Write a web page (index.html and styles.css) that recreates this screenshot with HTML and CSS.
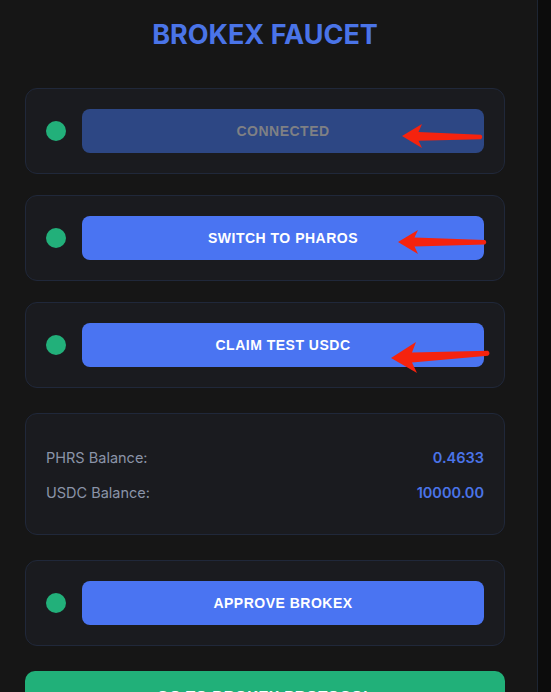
FILE: index.html
```html
<!DOCTYPE html>
<html lang="en">
<head>
    <meta charset="UTF-8">
    <meta name="viewport" content="width=device-width, initial-scale=1.0">
    <title>Brokex Faucet</title>
    <link rel="stylesheet" href="styles.css">
</head>
<body>
    <div id="faucet">
        <h1>BROKEX FAUCET</h1>

        <!-- Pasos -->
        <div class="step">
            <span class="dot"></span>
            <button class="btn connected">CONNECTED</button>
        </div>
        <div class="step">
            <span class="dot"></span>
            <button class="btn">SWITCH TO PHAROS</button>
        </div>
        <div class="step last">
            <span class="dot"></span>
            <button class="btn">CLAIM TEST USDC</button>
        </div>

        <!-- Balances -->
        <div class="balances">
            <div class="row">
                <span class="label">PHRS Balance:</span>
                <span class="value">0.4633</span>
            </div>
            <div class="row">
                <span class="label">USDC Balance:</span>
                <span class="value">10000.00</span>
            </div>
        </div>

        <div class="step last">
            <span class="dot"></span>
            <button class="btn">APPROVE BROKEX</button>
        </div>

        <button class="go">GO TO BROKEX PROTOCOL</button>
    </div>

    <!-- flechas de anotacion -->
    <svg class="notes" width="551" height="692" viewBox="0 0 551 692">
        <path d="M402 136 L422 124 L418.5 132 L481 134.8 Q483.5 137 481 139.3 L418.5 140.8 L422 148 Z"/>
        <path d="M398 242 L418 230 L414.5 237.5 L485 240 Q487.5 242.2 485 244.5 L414.5 246.5 L418 254 Z"/>
        <path d="M391 358 L416 342 L412 352.5 L488 350.8 Q491 353.2 488 355.8 L412 362.5 L417 373 Z"/>
    </svg>
</body>
</html>
```

FILE: styles.css
```css
body {
    margin: 0;
    padding: 0;
    background-color: #0c0c0c;
    font-family: Inter, "Noto Sans", sans-serif;
    overflow: hidden;
}
#faucet {
    box-sizing: border-box;
    width: 538px;
    min-height: 100vh;
    padding: 20px 32px 0 25px;
    background-color: #161616;
    border-right: 1px solid #1d2533;
}
#faucet h1 {
    margin: 0 0 38px 0;
    font-size: 27px;
    line-height: 30px;
    font-weight: 700;
    text-align: center;
    color: #4a74e8;
}
.step {
    display: flex;
    align-items: center;
    gap: 16px;
    padding: 20px;
    margin-bottom: 21px;
    background-color: #1a1b1f;
    border: 1px solid #20283a;
    border-radius: 12px;
}
.step.last {
    margin-bottom: 25px;
}
.dot {
    flex: none;
    width: 20px;
    height: 20px;
    border-radius: 50%;
    background-color: #22b07a;
}
.btn {
    flex: 1;
    height: 44px;
    border: none;
    border-radius: 8px;
    background-color: #4a74f2;
    color: #fff;
    font-family: "Liberation Sans", Arial, sans-serif;
    font-size: 14px;
    font-weight: bold;
    letter-spacing: 0.5px;
    cursor: pointer;
}
.btn.connected {
    background-color: #2d4784;
    color: #7f8084;
    cursor: default;
}
.balances {
    display: flex;
    flex-direction: column;
    gap: 15px;
    padding: 34px 20px 31px 20px;
    margin-bottom: 25px;
    background-color: #1a1b1f;
    border: 1px solid #20283a;
    border-radius: 12px;
}
.row {
    display: flex;
    justify-content: space-between;
    line-height: 20px;
    font-size: 14.5px;
}
.label {
    color: #8b94a8;
}
.value {
    color: #4a74e8;
    font-weight: 600;
}
.go {
    display: block;
    width: 100%;
    padding: 16px 0;
    border: none;
    border-radius: 10px;
    background-color: #21b079;
    color: #fff;
    font-family: "Liberation Sans", Arial, sans-serif;
    font-size: 15px;
    font-weight: bold;
    letter-spacing: 0.5px;
}
.notes {
    position: absolute;
    top: 0;
    left: 0;
    pointer-events: none;
}
.notes path {
    fill: #f5230e;
}
```
